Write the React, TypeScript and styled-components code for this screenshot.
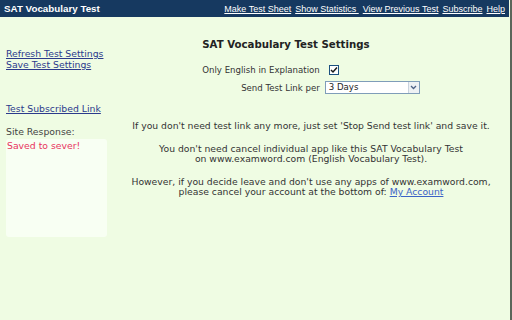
import React from "react";
import styled, { createGlobalStyle } from "styled-components";

const GlobalStyle = createGlobalStyle`
  html, body {
    margin: 0;
    padding: 0;
    background: #effce3;
  }
  body {
    font-family: "DejaVu Sans", Verdana, sans-serif;
    color: #333;
  }
  * { box-sizing: border-box; }
`;

const Frame = styled.div`
  width: 512px;
  height: 320px;
  overflow: hidden;
  display: flex;
  flex-direction: column;
  padding-right: 1px;
  border-right: 2px solid #5a665a;
  background: #effce3;
`;

const Header = styled.header`
  height: 17px;
  flex: none;
  background: #163960;
  display: flex;
  align-items: center;
  justify-content: space-between;
  padding: 0 4px 0 4px;
`;

const Brand = styled.div`
  font-family: "Liberation Sans", Arial, sans-serif;
  font-weight: bold;
  font-size: 9.8px;
  color: #fff;
`;

const Nav = styled.nav`
  display: flex;
  gap: 4px;
`;

const NavLink = styled.a`
  font-family: "Liberation Sans", Arial, sans-serif;
  font-size: 9px;
  color: #fff;
  text-decoration: underline;
  white-space: pre;
`;

const Body = styled.div`
  flex: 1;
  display: grid;
  grid-template-columns: 113px 1fr;
`;

const Sidebar = styled.aside`
  padding: 30.5px 0 0 6px;
  display: flex;
  flex-direction: column;
`;

const SideLink = styled.a<{ $gap?: number }>`
  display: block;
  font-size: 9.3px;
  line-height: 11px;
  color: #2c3a8c;
  text-decoration: underline;
  margin-top: ${(p) => p.$gap ?? 0}px;
`;

const SideLabel = styled.div`
  font-size: 9.3px;
  line-height: 11px;
  color: #444;
  margin-top: 12px;
`;

const ResponseBox = styled.div`
  margin-top: 2.5px;
  width: 101px;
  height: 98px;
  background: #f8fff3;
  border-radius: 3px;
  padding: 0.5px 1px;
  font-size: 9.3px;
  line-height: 11px;
  color: #e8335e;
`;

const Main = styled.main`
  padding-top: 22px;
  display: flex;
  flex-direction: column;
  align-items: center;
`;

const Settings = styled.div`
  display: grid;
  grid-template-columns: auto auto;
  column-gap: 5px;
  row-gap: 5px;
  align-items: center;
`;

const SettingsTitle = styled.h1`
  grid-column: 1 / -1;
  margin: 0 0 8px 0;
  font-size: 10.2px;
  line-height: 12px;
  font-weight: bold;
  color: #222;
`;

const Label = styled.div`
  font-size: 8.6px;
  line-height: 12px;
  text-align: right;
  color: #333;
`;

const Control = styled.div`
  display: flex;
  align-items: center;
`;

const CheckBox = styled.span`
  width: 10px;
  height: 10px;
  margin-left: 4px;
  border: 1px solid #1c5180;
  background: #fff;
  display: flex;
  align-items: center;
  justify-content: center;
`;

const Select = styled.div`
  width: 95px;
  height: 13px;
  border: 1px solid #7f9db9;
  background: #fff;
  display: flex;
  align-items: stretch;
  justify-content: space-between;
  font-size: 8.6px;
`;

const SelectValue = styled.span`
  padding-left: 3px;
  line-height: 11px;
  color: #222;
`;

const SelectArrow = styled.span`
  width: 11px;
  background: #eef1f4;
  border-left: 1px solid #c9d3de;
  display: flex;
  align-items: center;
  justify-content: center;
`;

const Notes = styled.div`
  margin-top: 27px;
  display: flex;
  flex-direction: column;
  gap: 12px;
  align-items: center;
`;

const Note = styled.p`
  margin: 0;
  font-size: 9.25px;
  line-height: 10.5px;
  text-align: center;
  white-space: nowrap;
  color: #333;
`;

const AccountLink = styled.a`
  color: #3b62c6;
  text-decoration: underline;
`;

export default function App() {
  return (
    <>
      <GlobalStyle />
      <Frame>
        <Header>
          <Brand>SAT Vocabulary Test</Brand>
          <Nav>
            <NavLink>Make Test Sheet</NavLink>
            <NavLink>{"Show Statistics "}</NavLink>
            <NavLink>View Previous Test</NavLink>
            <NavLink>Subscribe</NavLink>
            <NavLink>Help</NavLink>
          </Nav>
        </Header>
        <Body>
          <Sidebar>
            <SideLink>Refresh Test Settings</SideLink>
            <SideLink>Save Test Settings</SideLink>
            <SideLink $gap={33}>Test Subscribed Link</SideLink>
            <SideLabel>Site Response:</SideLabel>
            <ResponseBox>Saved to sever!</ResponseBox>
          </Sidebar>
          <Main>
            <Settings>
              <SettingsTitle>SAT Vocabulary Test Settings</SettingsTitle>
              <Label>Only English in Explanation</Label>
              <Control>
                <CheckBox>
                  <svg width="8" height="8" viewBox="0 0 8 8">
                    <path d="M1 4 L3 6 L7 1.5" fill="none" stroke="#1a1a1a" strokeWidth="1.5" />
                  </svg>
                </CheckBox>
              </Control>
              <Label>Send Test Link per</Label>
              <Control>
                <Select>
                  <SelectValue>3 Days</SelectValue>
                  <SelectArrow>
                    <svg width="7" height="5" viewBox="0 0 7 5">
                      <path d="M1 1 L3.5 3.5 L6 1" fill="none" stroke="#4d6185" strokeWidth="1.3" />
                    </svg>
                  </SelectArrow>
                </Select>
              </Control>
            </Settings>
            <Notes>
              <Note>If you don't need test link any more, just set 'Stop Send test link' and save it.</Note>
              <Note>
                You don't need cancel individual app like this SAT Vocabulary Test
                <br />
                on www.examword.com (English Vocabulary Test).
              </Note>
              <Note>
                However, if you decide leave and don't use any apps of www.examword.com,
                <br />
                please cancel your account at the bottom of: <AccountLink>My Account</AccountLink>
              </Note>
            </Notes>
          </Main>
        </Body>
      </Frame>
    </>
  );
}
